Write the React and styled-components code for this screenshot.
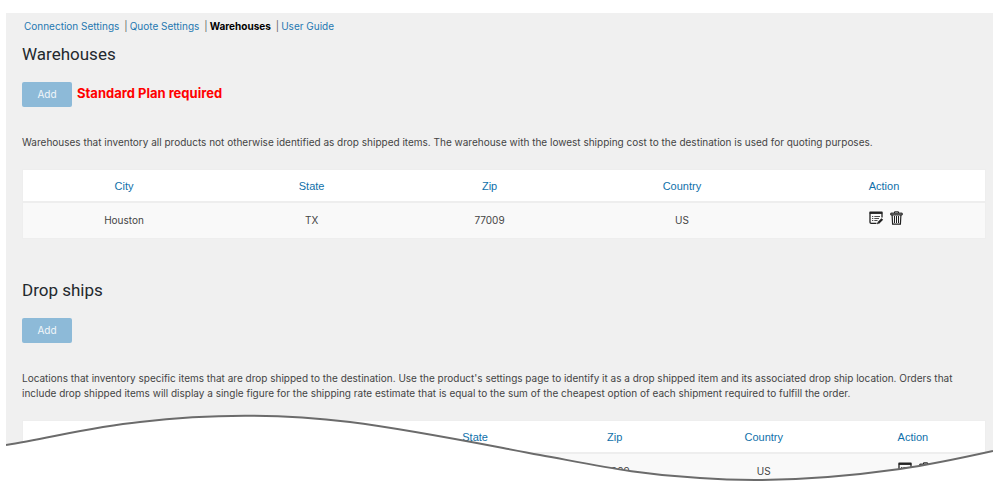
import React from 'react';
import styled, { createGlobalStyle } from 'styled-components';

const GlobalStyle = createGlobalStyle`
  *, *::before, *::after { box-sizing: border-box; }
  body {
    margin: 0;
    background: #fff;
    color: #444;
    font-family: Inter, 'Liberation Sans', sans-serif;
    font-size: 10px;
    line-height: 15px;
  }
`;

const Page = styled.main`
  padding: 13px 7px 18px 6px;
`;

const Panel = styled.div`
  position: relative;
  overflow: hidden;
  padding: 5px 7px 0 16px;
  background: #f0f0f0;
`;

const TabBar = styled.nav`
  display: flex;
  gap: 5px;
  padding-left: 2px;
  line-height: 16px;
`;

const Tab = styled.span`
  display: flex;
  gap: 2px;
  color: #666;

  & + &::before { content: '|'; }
`;

const TabLink = styled.a`
  color: ${({ $current }) => ($current ? '#000' : '#1f78b0')};
  font-weight: ${({ $current }) => ($current ? 700 : 400)};
  text-decoration: none;
`;

const Section = styled.section`
  padding-top: ${({ $first }) => ($first ? 8 : 39)}px;
`;

const Title = styled.h2`
  margin: 0;
  color: #23282d;
  font: 400 17px/24px Roboto, 'Liberation Sans', sans-serif;
`;

const Toolbar = styled.div`
  display: flex;
  gap: 5px;
  padding-top: 16px;
`;

const AddButton = styled.button`
  width: 50px;
  height: 25px;
  padding: 0;
  border: 0;
  border-radius: 2px;
  background: #8dbad8;
  color: #f2f7fa;
  font: inherit;
`;

const Notice = styled.strong`
  color: #f00;
  font-size: 13px;
  line-height: 22px;
`;

const Description = styled.p`
  margin: 28px 0 19px;
`;

const Table = styled.table`
  width: 100%;
  border: 1px solid #eee;
  border-collapse: separate;
  border-spacing: 0;
  table-layout: fixed;
  background: #fff;
`;

const Col = styled.col`
  width: ${({ $share }) => $share}%;
`;

const HeadCell = styled.th`
  height: 33px;
  padding: 0;
  border-bottom: 2px solid #eee;
  color: #0f70aa;
  font: 400 11px/16px 'Liberation Sans', Arial, sans-serif;
`;

const Cell = styled.td`
  height: 35px;
  padding: 0;
  background: #f9f9f9;
  text-align: center;
`;

const Actions = styled.div`
  display: flex;
  justify-content: center;
  gap: 6px;
  padding: 0 0 5px 4px;
`;

const IconButton = styled.button`
  display: flex;
  padding: 0;
  border: 0;
  background: none;
  color: #222;
`;

const Wave = styled.svg`
  position: absolute;
  bottom: 0;
  left: 0;
  width: 100%;
  height: 77px;
`;

function EditIcon() {
  return (
    <svg width="15" height="14" viewBox="0 0 15 14" fill="none" stroke="currentColor">
      <path d="M7.5 12.3H2.2Q1 12.3 1 11.1V2H13V6.5" strokeWidth="1.3" />
      <path d="M.6 1.6H13.4" strokeWidth="2.2" />
      <path d="M3 5.5H4.3M5.3 5.5H11M3 7.5H4.3M5.3 7.5H10M3 9.5H4.3M5.3 9.5H8.5" strokeWidth="1" opacity=".8" />
      <path d="M9.3 12L13.3 8" strokeWidth="2.4" />
      <path d="M8 13.3L8.5 11.3L10 12.8Z" fill="currentColor" stroke="none" />
    </svg>
  );
}

function TrashIcon() {
  return (
    <svg width="13" height="14" viewBox="0 0 13 14" fill="none" stroke="currentColor">
      <path d="M4.5 2V.8H8.5V2" strokeWidth="1" />
      <path d="M.8 2.1H12.2V4H.8Z" fill="#888" strokeWidth="1" />
      <path d="M2.1 4L2.6 13.2H10.4L10.9 4" strokeWidth="1.2" />
      <path d="M4.5 5V12M6.5 5V12M8.5 5V12" strokeWidth="1" />
    </svg>
  );
}

const tabs = ['Connection Settings', 'Quote Settings', 'Warehouses', 'User Guide'];

function LocationTable({ label, columns, row }) {
  return (
    <Table aria-label={label}>
      <colgroup>
        {columns.map(([name, share]) => <Col key={name} $share={share} />)}
      </colgroup>
      <thead>
        <tr>
          {columns.map(([name]) => <HeadCell key={name} scope="col">{name}</HeadCell>)}
        </tr>
      </thead>
      <tbody>
        <tr>
          {row.map((value, i) => <Cell key={i}>{value}</Cell>)}
          <Cell>
            <Actions>
              <IconButton type="button" aria-label="Edit"><EditIcon /></IconButton>
              <IconButton type="button" aria-label="Delete"><TrashIcon /></IconButton>
            </Actions>
          </Cell>
        </tr>
      </tbody>
    </Table>
  );
}

export default function App() {
  return (
    <Page>
      <GlobalStyle />
      <Panel>
        <TabBar>
          {tabs.map((tab) => (
            <Tab key={tab}>
              <TabLink href="#" $current={tab === 'Warehouses'}>{tab}</TabLink>
            </Tab>
          ))}
        </TabBar>

        <Section $first>
          <Title>Warehouses</Title>
          <Toolbar>
            <AddButton type="button">Add</AddButton>
            <Notice>Standard Plan required</Notice>
          </Toolbar>
          <Description>
            Warehouses that inventory all products not otherwise identified as drop shipped items. The
            warehouse with the lowest shipping cost to the destination is used for quoting purposes.
          </Description>
          <LocationTable
            label="Warehouses"
            columns={[['City', 21], ['State', 18], ['Zip', 19], ['Country', 21], ['Action', 21]]}
            row={['Houston', 'TX', '77009', 'US']}
          />
        </Section>

        <Section $first={false}>
          <Title>Drop ships</Title>
          <Toolbar>
            <AddButton type="button">Add</AddButton>
          </Toolbar>
          <Description>
            Locations that inventory specific items that are drop shipped to the destination. Use the
            product's settings page to identify it as a drop shipped item and its associated drop ship
            location. Orders that include drop shipped items will display a single figure for the
            shipping rate estimate that is equal to the sum of the cheapest option of each shipment
            required to fulfill the order.
          </Description>
          <LocationTable
            label="Drop ships"
            columns={[['', 40], ['State', 14], ['Zip', 15], ['Country', 16], ['Action', 15]]}
            row={['', '', '77009', 'US']}
          />
        </Section>

        <Wave viewBox="0 413 987 77" preserveAspectRatio="none" aria-hidden="true">
          <path
            d="M0 445C44 438 84 427 134 422C210 413 285 415 344 422C407 430 470 443 534 455C594 466 634 475 694 478C760 483 830 478 894 469C928 464 960 457 987 451V500H0Z"
            fill="#fff"
          />
          <path
            d="M0 445C44 438 84 427 134 422C210 413 285 415 344 422C407 430 470 443 534 455C594 466 634 475 694 478C760 483 830 478 894 469C928 464 960 457 987 451"
            fill="none"
            stroke="#6b6b6b"
            strokeWidth="2"
          />
        </Wave>
      </Panel>
    </Page>
  );
}
